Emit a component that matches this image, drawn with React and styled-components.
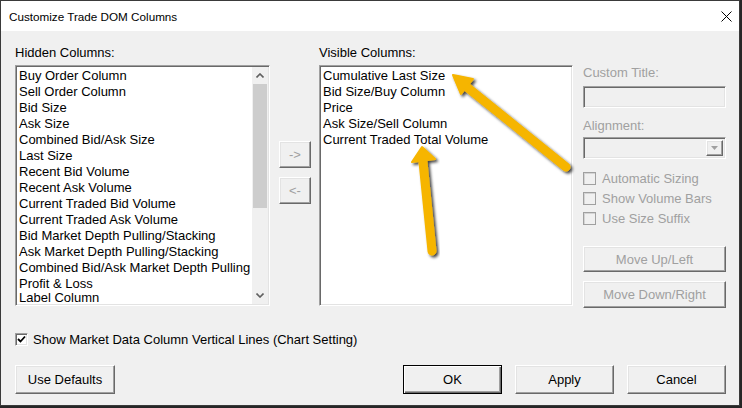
import React from "react";
import styled, { createGlobalStyle, css } from "styled-components";

const GlobalStyle = createGlobalStyle`
  html, body {
    margin: 0;
    padding: 0;
    background: #262626;
  }
  * {
    box-sizing: border-box;
  }
`;

const raised = css`
  border: 1px solid;
  border-color: #ffffff #696969 #696969 #ffffff;
  box-shadow: inset -1px -1px 0 #a0a0a0, inset 1px 1px 0 #e3e3e3;
`;

const sunken = css`
  border: 1px solid;
  border-color: #a0a0a0 #ffffff #ffffff #a0a0a0;
  box-shadow: inset 1px 1px 0 #696969, inset -1px -1px 0 #e3e3e3;
`;

const Window = styled.div`
  position: relative;
  width: 740px;
  height: 406px;
  border: 1px solid #3a3a3a;
  background: #f0f0f0;
  font-family: "Liberation Sans", Arial, sans-serif;
  font-size: 13px;
  color: #000;
  display: flex;
  flex-direction: column;
`;

const TitleBar = styled.div`
  height: 30px;
  background: #ffffff;
  display: flex;
  align-items: center;
  justify-content: space-between;
  padding: 0 7px 0 8px;
  font-size: 11.7px;
`;

const Body = styled.div`
  flex: 1;
  padding: 14px 13px 0 14px;
  display: flex;
  flex-direction: column;
`;

const Main = styled.div`
  display: flex;
  align-items: flex-start;
`;

const Column = styled.div`
  display: flex;
  flex-direction: column;
  width: ${(p) => p.$width}px;
`;

const Label = styled.div`
  line-height: 16px;
  height: 16px;
  white-space: nowrap;
  color: ${(p) => (p.$disabled ? "#a0a0a0" : "#000")};
  margin-top: ${(p) => p.$top || 0}px;
`;

const ListBox = styled.div`
  ${sunken};
  margin-top: 4px;
  height: 241px;
  background: #ffffff;
  display: flex;
  padding: 1px;
`;

const Items = styled.div`
  flex: 1;
  min-width: 0;
  overflow: hidden;
  padding: 1px 0 0 2px;
`;

const Item = styled.div`
  line-height: ${(p) => (p.$short ? 12 : 16)}px;
  height: ${(p) => (p.$short ? 12 : 16)}px;
  white-space: nowrap;
`;

const ScrollBar = styled.div`
  width: 16px;
  background: #f0f0f0;
  display: flex;
  flex-direction: column;
`;

const ScrollArrow = styled.div`
  height: 17px;
  display: flex;
  align-items: center;
  justify-content: center;
`;

const Thumb = styled.div`
  height: 124px;
  margin: 0 1px;
  background: #cdcdcd;
`;

const Track = styled.div`
  flex: 1;
`;

const ArrowColumn = styled.div`
  display: flex;
  flex-direction: column;
  gap: 9px;
  margin: 0 8px 0 9px;
  padding-top: 96px;
`;

const Button = styled.div`
  ${raised};
  width: ${(p) => p.$width}px;
  height: ${(p) => p.$height || 27}px;
  margin-top: ${(p) => p.$top || 0}px;
  background: #f0f0f0;
  display: flex;
  align-items: center;
  justify-content: center;
  white-space: nowrap;
  color: ${(p) => (p.$disabled ? "#a0a0a0" : "#000")};
  ${(p) =>
    p.$default &&
    css`
      border: 1px solid #000;
      box-shadow: inset 1px 1px 0 #ffffff, inset -1px -1px 0 #696969,
        inset -2px -2px 0 #a0a0a0;
    `}
`;

const PropsColumn = styled.div`
  width: 143px;
  margin-left: 10px;
  padding-top: 20px;
  display: flex;
  flex-direction: column;
`;

const Field = styled.div`
  ${sunken};
  height: 22px;
  margin-top: ${(p) => p.$top}px;
  background: #f0f0f0;
  display: flex;
  justify-content: flex-end;
  padding: 2px;
`;

const DropButton = styled.div`
  ${raised};
  width: 17px;
  display: flex;
  align-items: center;
  justify-content: center;
`;

const CheckRow = styled.div`
  display: flex;
  align-items: center;
  gap: ${(p) => p.$gap || 6}px;
  height: ${(p) => p.$height || 20}px;
  margin-top: ${(p) => p.$top || 0}px;
  white-space: nowrap;
  color: ${(p) => (p.$disabled ? "#a0a0a0" : "#000")};
`;

const CheckList = styled.div`
  margin-top: 9px;
  display: flex;
  flex-direction: column;
`;

const Box = styled.span`
  width: 13px;
  height: 13px;
  flex: none;
  display: flex;
  align-items: center;
  justify-content: center;
  background: ${(p) => (p.$disabled ? "#f0f0f0" : "#ffffff")};
  ${(p) =>
    p.$disabled
      ? css`
          border: 1px solid #a0a0a0;
          box-shadow: inset 1px 1px 0 #d4d4d4;
        `
      : sunken};
`;

const Footer = styled.div`
  display: flex;
  align-items: center;
  margin-top: 18px;
`;

const FooterRight = styled.div`
  margin-left: auto;
  display: flex;
  gap: 13px;
`;

const Overlay = styled.svg`
  position: absolute;
  left: -1px;
  top: -1px;
  pointer-events: none;
`;

const hidden = [
  "Buy Order Column",
  "Sell Order Column",
  "Bid Size",
  "Ask Size",
  "Combined Bid/Ask Size",
  "Last Size",
  "Recent Bid Volume",
  "Recent Ask Volume",
  "Current Traded Bid Volume",
  "Current Traded Ask Volume",
  "Bid Market Depth Pulling/Stacking",
  "Ask Market Depth Pulling/Stacking",
  "Combined Bid/Ask Market Depth Pulling",
  "Profit & Loss",
  "Label Column",
];

const visible = [
  "Cumulative Last Size",
  "Bid Size/Buy Column",
  "Price",
  "Ask Size/Sell Column",
  "Current Traded Total Volume",
];

const Chevron = ({ up }) => (
  <svg width="8" height="5" viewBox="0 0 8 5">
    <path
      d={up ? "M0.5 4.5 L4 1 L7.5 4.5" : "M0.5 0.5 L4 4 L7.5 0.5"}
      fill="none"
      stroke="#606060"
      strokeWidth="1.6"
    />
  </svg>
);

const Check = ({ checked, disabled }) => (
  <Box $disabled={disabled}>
    {checked && (
      <svg width="9" height="9" viewBox="0 0 9 9">
        <path d="M1 4 L3.5 6.5 L8 1.5" fill="none" stroke="#000" strokeWidth="1.8" />
      </svg>
    )}
  </Box>
);

const Arrow = ({ tail, base, head }) => (
  <g filter="url(#shadow)">
    <line
      x1={tail[0]}
      y1={tail[1]}
      x2={base[0]}
      y2={base[1]}
      stroke="#f6b500"
      strokeWidth="9"
      strokeLinecap="round"
    />
    <polygon points={head} fill="#f6b500" stroke="#f6b500" strokeWidth="2" strokeLinejoin="round" />
  </g>
);

export default function App() {
  return (
    <>
      <GlobalStyle />
      <Window>
        <TitleBar>
          <span>Customize Trade DOM Columns</span>
          <svg width="11" height="11" viewBox="0 0 11 11">
            <path d="M0.5 0.5 L10.5 10.5 M10.5 0.5 L0.5 10.5" stroke="#000" strokeWidth="1" />
          </svg>
        </TitleBar>
        <Body>
          <Main>
            <Column $width={255}>
              <Label>Hidden Columns:</Label>
              <ListBox>
                <Items>
                  {hidden.map((t, i) => (
                    <Item key={t} $short={i === hidden.length - 1}>
                      {t}
                    </Item>
                  ))}
                </Items>
                <ScrollBar>
                  <ScrollArrow>
                    <Chevron up />
                  </ScrollArrow>
                  <Thumb />
                  <Track />
                  <ScrollArrow>
                    <Chevron />
                  </ScrollArrow>
                </ScrollBar>
              </ListBox>
            </Column>
            <ArrowColumn>
              <Button $width={32} $disabled>
                -&gt;
              </Button>
              <Button $width={32} $disabled>
                &lt;-
              </Button>
            </ArrowColumn>
            <Column $width={254}>
              <Label>Visible Columns:</Label>
              <ListBox>
                <Items>
                  {visible.map((t) => (
                    <Item key={t}>{t}</Item>
                  ))}
                </Items>
              </ListBox>
            </Column>
            <PropsColumn>
              <Label $disabled>Custom Title:</Label>
              <Field $top={5} />
              <Label $disabled $top={10}>
                Alignment:
              </Label>
              <Field $top={3}>
                <DropButton>
                  <svg width="7" height="4" viewBox="0 0 7 4">
                    <polygon points="0,0 7,0 3.5,4" fill="#a0a0a0" />
                  </svg>
                </DropButton>
              </Field>
              <CheckList>
                <CheckRow $disabled>
                  <Check disabled />
                  Automatic Sizing
                </CheckRow>
                <CheckRow $disabled>
                  <Check disabled />
                  Show Volume Bars
                </CheckRow>
                <CheckRow $disabled>
                  <Check disabled />
                  Use Size Suffix
                </CheckRow>
              </CheckList>
              <Button $width={143} $height={26} $top={18} $disabled>
                Move Up/Left
              </Button>
              <Button $width={143} $top={9} $disabled>
                Move Down/Right
              </Button>
            </PropsColumn>
          </Main>
          <CheckRow $gap={5} $height={16} $top={23}>
            <Check checked />
            Show Market Data Column Vertical Lines (Chart Setting)
          </CheckRow>
          <Footer>
            <Button $width={100} $height={29}>
              Use Defaults
            </Button>
            <FooterRight>
              <Button $width={99} $height={29} $default>
                OK
              </Button>
              <Button $width={99} $height={29}>
                Apply
              </Button>
              <Button $width={99} $height={29}>
                Cancel
              </Button>
            </FooterRight>
          </Footer>
        </Body>
        <Overlay width="742" height="408" viewBox="0 0 742 408">
          <defs>
            <filter id="shadow" x="-20%" y="-20%" width="140%" height="140%">
              <feDropShadow dx="2" dy="2" stdDeviation="1.5" floodColor="#000" floodOpacity="0.75" />
            </filter>
          </defs>
          <Arrow
            tail={[566, 167]}
            base={[468, 88]}
            head="453,75 473,79 461,94"
          />
          <Arrow
            tail={[432, 251]}
            base={[423, 162]}
            head="422,147 435,159 412,162"
          />
        </Overlay>
      </Window>
    </>
  );
}
